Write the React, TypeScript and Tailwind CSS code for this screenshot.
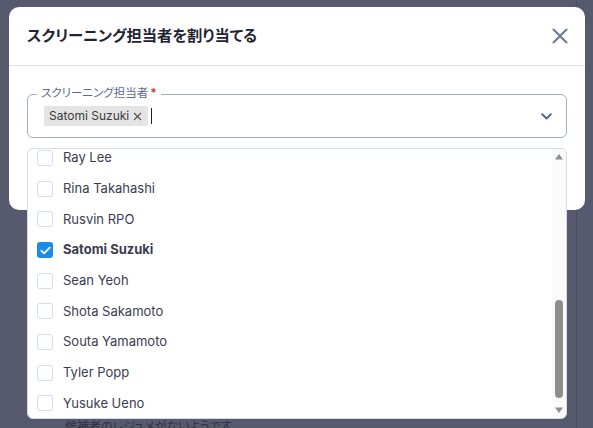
import React from "react";

const names = [
  "Ray Lee",
  "Rina Takahashi",
  "Rusvin RPO",
  "Satomi Suzuki",
  "Sean Yeoh",
  "Shota Sakamoto",
  "Souta Yamamoto",
  "Tyler Popp",
  "Yusuke Ueno",
];

const jp = "font-['Inter','Noto_Sans_CJK_JP',sans-serif] [font-feature-settings:'palt']";

export default function App() {
  return (
    <div className="relative w-[593px] h-[428px] overflow-hidden bg-[#575a6e] font-['Inter','Noto_Sans_CJK_JP',sans-serif]">
      {/* underlying page hints */}
      <div className="absolute left-[576px] top-0 bottom-0 w-px bg-[#4b4e61]" />
      <div className={`absolute left-[65px] top-[419px] text-[12px] leading-[16px] text-[#2f3142] ${jp}`}>
        候補者のレジュメがないようです
      </div>

      {/* modal */}
      <div className="absolute left-[9px] top-[7px] w-[576px] h-[203px] bg-white rounded-[10px] flex flex-col">
        <div className="h-[59px] shrink-0 flex items-center justify-between pl-[18px] pr-[17px] border-b border-[#dde3ee]">
          <h2 className={`text-[15.3px] font-bold text-[#1f2433] ${jp}`}>スクリーニング担当者を割り当てる</h2>
          <svg width="16" height="16" viewBox="0 0 16 16" className="text-[#6a7796]">
            <path d="M1.5 1.5 L14.5 14.5 M14.5 1.5 L1.5 14.5" stroke="currentColor" strokeWidth="2" strokeLinecap="round" />
          </svg>
        </div>
        <div className="px-[18px] pt-[28px]">
          <div className="relative h-[44px] border border-[#a3adbf] rounded-[6px] flex items-center pl-[16px] pr-[14px]">
            <div className={`absolute -top-[10px] left-[9px] px-[4px] bg-white text-[11.5px] leading-[16px] text-[#5a6890] ${jp}`}>
              スクリーニング担当者<span className="ml-[2px] text-[#e53935] font-bold">*</span>
            </div>
            <div className="h-[20px] bg-[#e4e4e4] rounded-[2px] flex items-center pl-[5px] pr-[6px] gap-[4px] text-[12px] text-[#3a3a3a]">
              <span>Satomi Suzuki</span>
              <svg width="9" height="9" viewBox="0 0 9 9">
                <path d="M1 1 L8 8 M8 1 L1 8" stroke="#555" strokeWidth="1.2" />
              </svg>
            </div>
            <div className="ml-[3px] w-px h-[16px] bg-[#222]" />
            <div className="flex-1" />
            <svg width="11" height="7" viewBox="0 0 11 7" className="text-[#5a6890]">
              <path d="M1.2 1.2 L5.5 5.5 L9.8 1.2" fill="none" stroke="currentColor" strokeWidth="2" strokeLinecap="round" strokeLinejoin="round" />
            </svg>
          </div>
        </div>
      </div>

      {/* dropdown list */}
      <div className="absolute left-[27px] top-[148px] w-[540px] h-[271px] bg-white border border-[#d3dbe8] rounded-[6px] overflow-hidden flex">
        <div className="flex-1 overflow-hidden">
          <ul className="-mt-[6.2px]">
            {names.map((n) => {
              const checked = n === "Satomi Suzuki";
              return (
                <li key={n} className="h-[30.65px] flex items-center pl-[9px] gap-[10px]">
                  {checked ? (
                    <span className="w-[16px] h-[16px] rounded-[3px] bg-[#1a8be6] flex items-center justify-center">
                      <svg width="11" height="9" viewBox="0 0 11 9">
                        <path d="M1.3 4.6 L4.1 7.3 L9.7 1.6" fill="none" stroke="white" strokeWidth="1.7" strokeLinecap="round" strokeLinejoin="round" />
                      </svg>
                    </span>
                  ) : (
                    <span className="w-[16px] h-[16px] rounded-[3px] border border-[#d6dce8] bg-white" />
                  )}
                  <span className={`text-[13px] text-[#3a3d50] ${checked ? "font-bold" : ""}`}>{n}</span>
                </li>
              );
            })}
          </ul>
        </div>
        <div className="w-[14px] bg-[#fafafa] flex flex-col items-center">
          <svg width="10" height="8" viewBox="0 0 10 8" className="mt-[4px]">
            <path d="M5 1 L9 6.5 L1 6.5 Z" fill="#8e8e8e" />
          </svg>
          <div className="flex-1" />
          <div className="w-[8px] h-[98px] rounded-[4px] bg-[#8e8e8e]" />
          <svg width="10" height="8" viewBox="0 0 10 8" className="mt-[8px] mb-[4px]">
            <path d="M1 1.5 L9 1.5 L5 7 Z" fill="#8e8e8e" />
          </svg>
        </div>
      </div>
    </div>
  );
}
